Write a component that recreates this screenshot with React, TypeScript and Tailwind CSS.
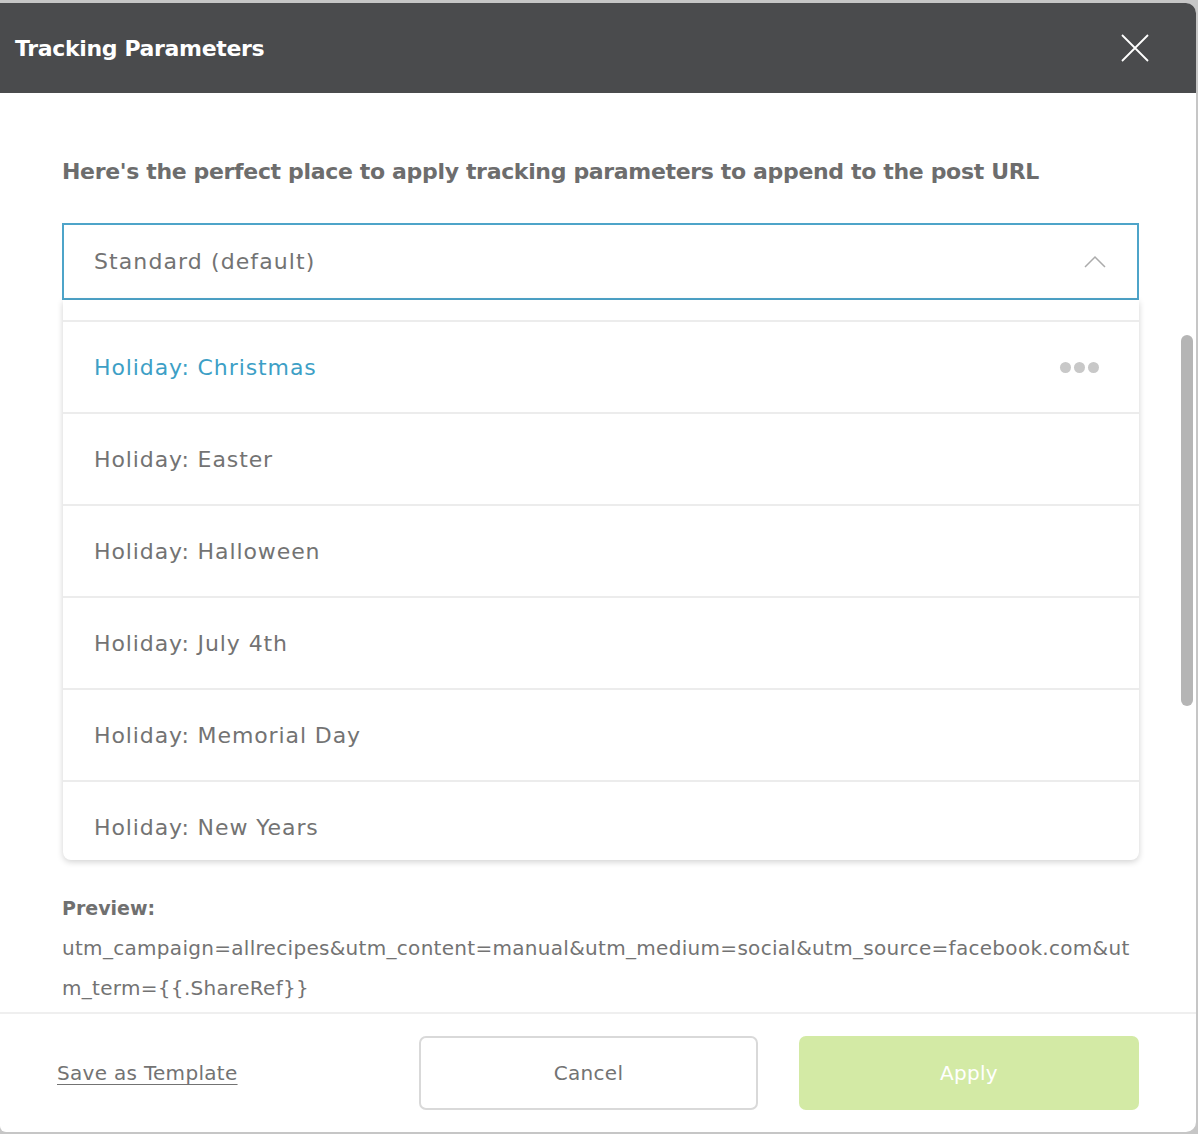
const templates = [
  "Holiday: Christmas",
  "Holiday: Easter",
  "Holiday: Halloween",
  "Holiday: July 4th",
  "Holiday: Memorial Day",
  "Holiday: New Years",
];

const previewText =
  "utm_campaign=allrecipes&utm_content=manual&utm_medium=social&utm_source=facebook.com&utm_term={{.ShareRef}}";

export default function App() {
  return (
    <div
      className="w-[1198px] h-[1134px] bg-[#c6c6c6] pt-[3px] pb-[2px] pr-[2px] overflow-hidden"
      style={{ fontFamily: '"DejaVu Sans", Inter, sans-serif' }}
    >
      <div className="h-full bg-white rounded-r-[10px] rounded-bl-[6px] overflow-hidden flex flex-col">
        {/* Header */}
        <div className="h-[90px] shrink-0 bg-[#4a4b4d] flex items-center justify-between pl-[15px] pr-[47px]">
          <h1 className="text-[22px] font-bold text-white tracking-[-0.35px]">Tracking Parameters</h1>
          <button className="text-white">
            <svg width="28" height="28" viewBox="0 0 28 28" stroke="currentColor" strokeWidth="1.8" fill="none">
              <path d="M1 1 L27 27 M27 1 L1 27" />
            </svg>
          </button>
        </div>

        {/* Body */}
        <div className="relative flex-1 pl-[62px] pr-[57px] pt-[64px]">
          <p className="text-[22px] leading-[30px] font-semibold text-[#6d6d6d] tracking-[-0.34px]">
            Here's the perfect place to apply tracking parameters to append to the post URL
          </p>

          <div className="mt-[36px] h-[77px] border-2 border-[#4ea4c9] flex items-center justify-between pl-[30px] pr-[31px]">
            <span className="text-[22px] text-[#737373] tracking-[1.1px]">Standard (default)</span>
            <svg width="22" height="13" viewBox="0 0 22 13" stroke="#ababab" strokeWidth="1.5" fill="none">
              <path d="M1 12 L11 2 L21 12" />
            </svg>
          </div>

          {/* Dropdown list */}
          <div className="ml-px h-[560px] overflow-hidden bg-white rounded-b-[8px] shadow-[0_2px_6px_rgba(0,0,0,0.18)]">
            <div className="h-[22px] border-b-2 border-[#ececec]" />
            {templates.map((t, i) => (
              <div
                key={t}
                className="h-[92px] shrink-0 border-b-2 border-[#ececec] flex items-center justify-between pl-[31px] pr-[40px]"
              >
                <span className={`text-[22px] tracking-[0.9px] ${i === 0 ? "text-[#3d9fc6]" : "text-[#737373]"}`}>
                  {t}
                </span>
                {i === 0 && (
                  <span className="flex gap-[3px]">
                    <span className="w-[11px] h-[11px] rounded-full bg-[#c8c8c8]" />
                    <span className="w-[11px] h-[11px] rounded-full bg-[#c8c8c8]" />
                    <span className="w-[11px] h-[11px] rounded-full bg-[#c8c8c8]" />
                  </span>
                )}
              </div>
            ))}
          </div>

          <div className="mt-[33px] text-[19px] leading-[30px] font-bold text-[#707070]">Preview:</div>
          <div className="mt-[5px] text-[20px] leading-[40px] text-[#737373] tracking-[0.3px] break-all pr-[2px]">
            {previewText}
          </div>

          {/* Scrollbar thumb */}
          <div className="absolute right-[3px] top-[242px] w-[12px] h-[371px] rounded-full bg-[#b5b5b5]" />
        </div>

        {/* Footer */}
        <div className="h-[120px] shrink-0 border-t-2 border-[#efefef] flex items-center justify-between pl-[57px] pr-[57px]">
          <a className="text-[20px] text-[#737373] tracking-[0.3px] underline underline-offset-4 decoration-1 cursor-pointer">
            Save as Template
          </a>
          <div className="flex gap-[41px]">
            <button className="w-[339px] h-[74px] border-2 border-[#d9d9d9] rounded-[7px] text-[20px] tracking-[0.3px] text-[#737373]">
              Cancel
            </button>
            <button className="w-[340px] h-[74px] bg-[#d3eaa5] rounded-[7px] text-[20px] tracking-[0.3px] text-white">
              Apply
            </button>
          </div>
        </div>
      </div>
    </div>
  );
}
